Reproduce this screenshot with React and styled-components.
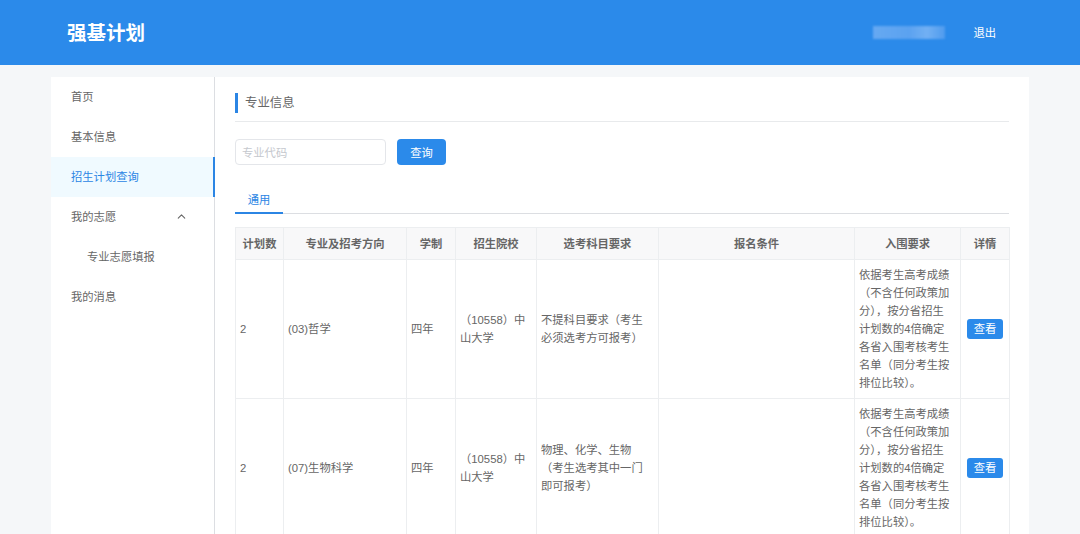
import styled, { createGlobalStyle } from 'styled-components';
import { ChevronUp } from 'lucide-react';

const REQUIREMENT = '依据考生高考成绩（不含任何政策加分），按分省招生计划数的4倍确定各省入围考核考生名单（同分考生按排位比较）。';

const rows = [
  {
    plan: '2',
    major: '(03)哲学',
    years: '四年',
    school: '（10558）中山大学',
    subjects: '不提科目要求（考生必须选考方可报考）',
  },
  {
    plan: '2',
    major: '(07)生物科学',
    years: '四年',
    school: '（10558）中山大学',
    subjects: '物理、化学、生物（考生选考其中一门即可报考）',
  },
];

const columns = [
  { title: '计划数', width: 48 },
  { title: '专业及招考方向', width: 123 },
  { title: '学制', width: 49 },
  { title: '招生院校', width: 81 },
  { title: '选考科目要求', width: 122 },
  { title: '报名条件', width: 196 },
  { title: '入围要求', width: 106 },
  { title: '详情', width: 49 },
];

function App() {
  return (
    <>
      <GlobalStyle />
      <Header>
        <Logo>强基计划</Logo>
        <UserArea>
          <BlurredName />
          <Logout>退出</Logout>
        </UserArea>
      </Header>
      <Container>
        <Sidebar>
          <MenuItem>首页</MenuItem>
          <MenuItem>基本信息</MenuItem>
          <MenuItem $active>招生计划查询</MenuItem>
          <MenuItem>
            我的志愿
            <ChevronUp size={13} strokeWidth={2} color="#666" />
          </MenuItem>
          <MenuItem $sub>专业志愿填报</MenuItem>
          <MenuItem>我的消息</MenuItem>
        </Sidebar>
        <Content>
          <TitleRow>
            <Title>专业信息</Title>
          </TitleRow>
          <SearchRow>
            <SearchInput placeholder="专业代码" />
            <PrimaryButton>查询</PrimaryButton>
          </SearchRow>
          <Tabs>
            <Tab>通用</Tab>
          </Tabs>
          <Table>
            <colgroup>
              {columns.map((col) => (
                <col key={col.title} width={col.width} />
              ))}
            </colgroup>
            <thead>
              <tr>
                {columns.map((col) => (
                  <Th key={col.title}>{col.title}</Th>
                ))}
              </tr>
            </thead>
            <tbody>
              {rows.map((row) => (
                <tr key={row.major}>
                  <Td>{row.plan}</Td>
                  <Td>{row.major}</Td>
                  <Td>{row.years}</Td>
                  <Td>{row.school}</Td>
                  <Td>{row.subjects}</Td>
                  <Td />
                  <Td>{REQUIREMENT}</Td>
                  <DetailCell>
                    <SmallButton>查看</SmallButton>
                  </DetailCell>
                </tr>
              ))}
            </tbody>
          </Table>
        </Content>
      </Container>
    </>
  );
}

const GlobalStyle = createGlobalStyle`
  html, body {
    margin: 0;
    height: 534px;
    overflow: hidden;
    background: #f5f7f9;
    font-family: "Liberation Sans", "Noto Sans CJK SC", sans-serif;
    font-size: 11.3px;
    color: #666;
  }
`;

const Header = styled.header`
  box-sizing: border-box;
  height: 65px;
  background-color: #2b8aea;
  padding: 0 84px 2px 67px;
  display: flex;
  justify-content: space-between;
  align-items: center;
`;

const Logo = styled.div`
  font-size: 19.5px;
  font-weight: bold;
  color: #fff;
`;

const UserArea = styled.div`
  display: flex;
  align-items: center;
  gap: 28px;
`;

const BlurredName = styled.div`
  width: 72px;
  height: 13px;
  margin-top: 2px;
  background: linear-gradient(90deg, #66a9f2, #5ba2f0 50%, #72b0f3 75%, #4f9bee);
  filter: blur(1px);
`;

const Logout = styled.div`
  color: #fff;
`;

const Container = styled.main`
  width: 978px;
  margin: 12px 0 0 51px;
  background: #fff;
  display: flex;
  min-height: 457px;
`;

const Sidebar = styled.nav`
  width: 163px;
  flex: none;
  border-right: 1px solid #dcdee2;
`;

const MenuItem = styled.div`
  height: 38px;
  padding: 0 25px 2px ${(p) => (p.$sub ? '36px' : '20px')};
  margin-right: -1px;
  display: flex;
  align-items: center;
  justify-content: space-between;
  color: ${(p) => (p.$active ? '#2b85e4' : '#666')};
  background: ${(p) => (p.$active ? '#f0faff' : 'transparent')};
  border-right: 2px solid ${(p) => (p.$active ? '#2b85e4' : 'transparent')};
`;

const Content = styled.section`
  flex: 1;
  min-width: 0;
  padding: 16px 20px 0 20px;
`;

const TitleRow = styled.div`
  padding-bottom: 8px;
  border-bottom: 1px solid #e8eaec;
`;

const Title = styled.h2`
  margin: 0;
  height: 20px;
  line-height: 20px;
  padding-left: 7px;
  border-left: 3px solid #2b85e4;
  font-size: 12.4px;
  font-weight: normal;
  color: #666;
`;

const SearchRow = styled.div`
  display: flex;
  gap: 11px;
  margin-top: 17px;
`;

const SearchInput = styled.input`
  box-sizing: border-box;
  width: 151px;
  height: 26px;
  padding: 2px 6px 0;
  border: 1px solid #e4e6ea;
  border-radius: 4px;
  outline: none;
  font: inherit;

  &::placeholder {
    color: #c5c8ce;
  }
`;

const PrimaryButton = styled.button`
  width: 49px;
  height: 26px;
  border: none;
  border-radius: 4px;
  background: #2b8aea;
  color: #fff;
  font: inherit;
`;

const Tabs = styled.div`
  display: flex;
  margin-top: 22px;
  border-bottom: 1px solid #dcdee2;
`;

const Tab = styled.div`
  width: 48px;
  height: 25px;
  line-height: 26px;
  text-align: center;
  color: #2b85e4;
  margin-bottom: -1px;
  border-bottom: 2px solid #2b85e4;
`;

const Table = styled.table`
  table-layout: fixed;
  width: 774px;
  margin-top: 13px;
  border-collapse: collapse;
  border-spacing: 0;
  line-height: 18px;
`;

const Th = styled.th`
  height: 31px;
  padding: 0;
  background: #f8f8f9;
  border: 1px solid #eceef0;
  font-weight: bold;
  color: #666;
`;

const Td = styled.td`
  padding: 6px 6px 6px 4px;
  border: 1px solid #eceef0;
  color: #666;
  word-break: break-all;
`;

const DetailCell = styled(Td)`
  text-align: center;
  padding: 0;
`;

const SmallButton = styled.button`
  width: 36px;
  height: 20px;
  padding: 0;
  border: none;
  border-radius: 3px;
  background: #2b8aea;
  color: #fff;
  font: inherit;
`;

export default App;
